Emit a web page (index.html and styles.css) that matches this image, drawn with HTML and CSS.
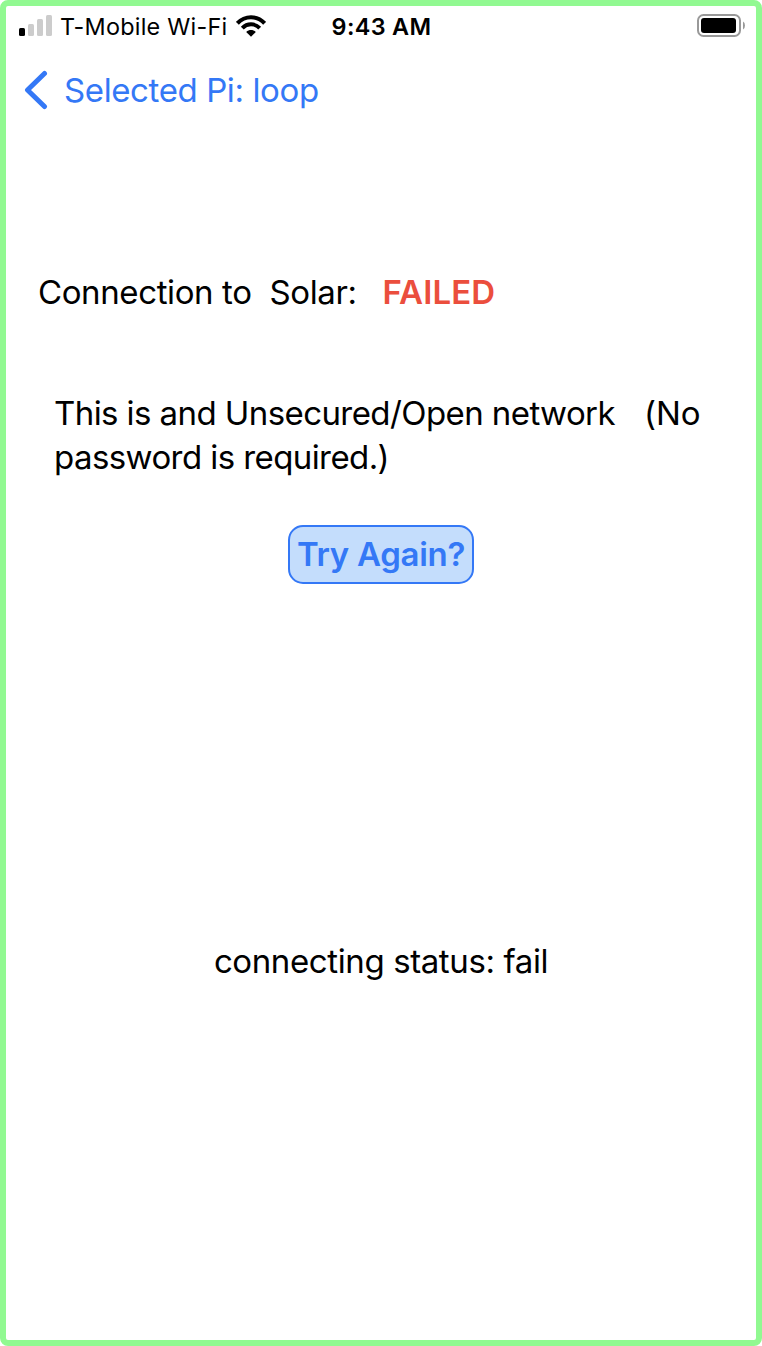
FILE: index.html
```html
<!DOCTYPE html>
<html lang="en">
<head>
<meta charset="utf-8">
<title>Connection status</title>
<link rel="stylesheet" href="styles.css">
</head>
<body>
<main class="screen">
  <header class="status-bar">
    <div class="carrier">
      <svg class="signal" width="34" height="22" viewBox="0 0 34 22">
        <rect x="0" y="13" width="6" height="8" rx="1.5" fill="#000"/>
        <rect x="9" y="9" width="6" height="12" rx="1.5" fill="#ccc"/>
        <rect x="18" y="4" width="6" height="17" rx="1.5" fill="#ccc"/>
        <rect x="27" y="0" width="6" height="21" rx="1.5" fill="#ccc"/>
      </svg>
      <span class="carrier-name">T-Mobile Wi-Fi</span>
      <svg class="wifi" width="30" height="22" viewBox="0 0 30 22">
        <g fill="none" stroke="#000" stroke-width="4">
          <path d="M1.4 8.3C9 .2 21 .2 28.6 8.3"/>
          <path d="M6.3 13.1C11.2 8.1 18.8 8.1 23.7 13.1"/>
        </g>
        <path d="M10.2 17C13 14.4 17 14.4 19.8 17L15 21.8Z"/>
      </svg>
    </div>
    <time class="clock">9:43 AM</time>
    <svg class="battery" width="49" height="24" viewBox="0 0 49 24">
      <rect x="1" y="1" width="42" height="21" rx="5.5" fill="none" stroke="#999" stroke-width="2"/>
      <rect x="4" y="4" width="35" height="15" rx="3" fill="#000"/>
      <path d="M46 7.5Q48 8.7 48 11.5T46 15.5Z" fill="#999"/>
    </svg>
  </header>
  <nav class="nav-bar">
    <svg class="chevron" width="24" height="40" viewBox="0 0 24 40">
      <path d="M20.5 3.5L3.5 20L20.5 36.5" fill="none" stroke="#3478f6" stroke-width="5" stroke-linecap="round" stroke-linejoin="round"/>
    </svg>
    <a class="back-label">Selected Pi: loop</a>
  </nav>
  <section class="connection">
    <span class="connection-label">Connection to</span>
    <span class="network-name">Solar:</span>
    <strong class="result">FAILED</strong>
  </section>
  <p class="notice"><span class="notice-main">This is and Unsecured/Open network</span><span class="notice-no">(No</span><br><span class="notice-end">password is required.)</span></p>
  <button class="retry">Try Again?</button>
  <p class="status">connecting status: fail</p>
</main>
</body>
</html>
```

FILE: styles.css
```css
* { box-sizing: border-box; }
body { margin: 0; background: #fff; }
.screen {
  width: 762px;
  height: 1346px;
  border: 6px solid #91f991;
  border-radius: 8px;
  display: flex;
  flex-direction: column;
  font: 400 33px/44px Inter, "Liberation Sans", sans-serif;
  letter-spacing: -.39px;
  color: #000;
  white-space: pre;
}
svg { display: block; flex: none; }
.status-bar {
  height: 40px;
  display: grid;
  grid-template-columns: 1fr auto 1fr;
  align-items: center;
  padding: 0 10px 0 13px;
  font-size: 23.4px;
  line-height: 40px;
}
.carrier { display: flex; align-items: center; }
.carrier-name { margin-left: 7px; padding-top: 2px; line-height: 38px; letter-spacing: .23px; }
.wifi { margin-left: 9px; }
.clock { margin-right: 2px; padding-top: 2px; line-height: 38px; font-weight: 600; letter-spacing: .35px; }
.battery { justify-self: end; }
.nav-bar {
  height: 88px;
  display: flex;
  align-items: center;
  padding-left: 18px;
  color: #3478f6;
}
.back-label { margin-left: 16px; }
.connection { margin: 136px 0 0 32px; display: flex; }
.network-name { margin-left: 18px; }
.result { margin-left: 26px; font-weight: 600; color: #eb4e3d; letter-spacing: .1px; }
.notice { margin: 77px 0 0 48px; letter-spacing: -.58px; }
.notice-no { margin-left: 29px; letter-spacing: -.1px; }
.retry {
  align-self: center;
  width: 186px;
  height: 59px;
  margin: 46px 0 0;
  padding: 0 0 2px;
  border: 2px solid #3478f6;
  border-radius: 15px;
  background: #c4ddfc;
  color: #3478f6;
  font: inherit;
  font-weight: 600;
  letter-spacing: -.3px;
}
.status { margin: 355px 0 0; text-align: center; }
```
